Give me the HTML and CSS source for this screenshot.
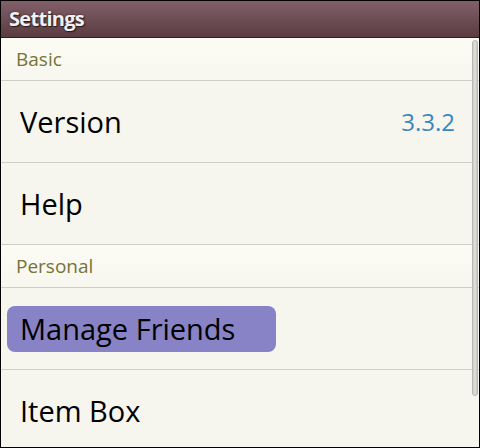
FILE: index.html
```html
<!DOCTYPE html>
<html>
<head>
<meta charset="utf-8">
<link rel="stylesheet" href="styles.css">
</head>
<body>
<div class="screen">
  <div class="titlebar"><span class="title">Settings</span></div>
  <div class="list">
    <div class="section">Basic</div>
    <div class="row"><span class="label">Version</span><span class="value">3.3.2</span></div>
    <div class="row"><span class="label">Help</span></div>
    <div class="section">Personal</div>
    <div class="row row-selected"><span class="label highlight">Manage Friends</span></div>
    <div class="row row-last"><span class="label">Item Box</span></div>
    <div class="scrollbar"></div>
  </div>
</div>
</body>
</html>
```
FILE: styles.css
```css
html, body {
  margin: 0;
  padding: 0;
  background: #000;
}
.screen {
  width: 480px;
  height: 448px;
  box-sizing: border-box;
  border: 1px solid #000;
  display: flex;
  flex-direction: column;
  overflow: hidden;
  font-family: "Open Sans", "DejaVu Sans", sans-serif;
}
.titlebar {
  height: 36px;
  flex: none;
  background: linear-gradient(to bottom, #81606a 0%, #6e4e55 50%, #5a3c41 100%);
  border-bottom: 1px solid #2e1d20;
  display: flex;
  align-items: center;
  padding-left: 8px;
}
.title {
  color: #f2f0f0;
  font-weight: bold;
  font-size: 20px;
  letter-spacing: -0.7px;
  text-shadow: 0 0 2px #2a1a1c, 1px 1px 1px #2a1a1c;
  position: relative;
  top: -1px;
}
.list {
  flex: 1;
  position: relative;
  background: #f6f5ee;
  display: flex;
  flex-direction: column;
}
.section {
  height: 42px;
  flex: none;
  border-bottom: 1px solid #d0cfc7;
  background: linear-gradient(to bottom, #fcfcf5, #f7f7ef);
  color: #767336;
  font-size: 19px;
  display: flex;
  align-items: center;
  padding-left: 15px;
}
.row {
  height: 81px;
  flex: none;
  border-bottom: 1px solid #d0cfc7;
  display: flex;
  align-items: center;
  justify-content: space-between;
  padding: 0 24px 0 19px;
  color: #000;
}
.row-last {
  border-bottom: none;
}
.row-selected {
  padding-left: 6px;
}
.label {
  font-size: 29px;
}
.highlight {
  width: 269px;
  height: 46px;
  box-sizing: border-box;
  background: #8783c6;
  border-radius: 8px;
  display: flex;
  align-items: center;
  padding-left: 13px;
}
.value {
  color: #3a87c0;
  font-size: 24px;
}
.scrollbar {
  position: absolute;
  right: 1px;
  top: 2px;
  width: 6px;
  height: 356px;
  border-radius: 3px;
  background: linear-gradient(to right, #c9c9c4, #e4e4df 50%, #c2c2bd);
  border: 1px solid #b8b8b2;
  box-sizing: border-box;
}
```
